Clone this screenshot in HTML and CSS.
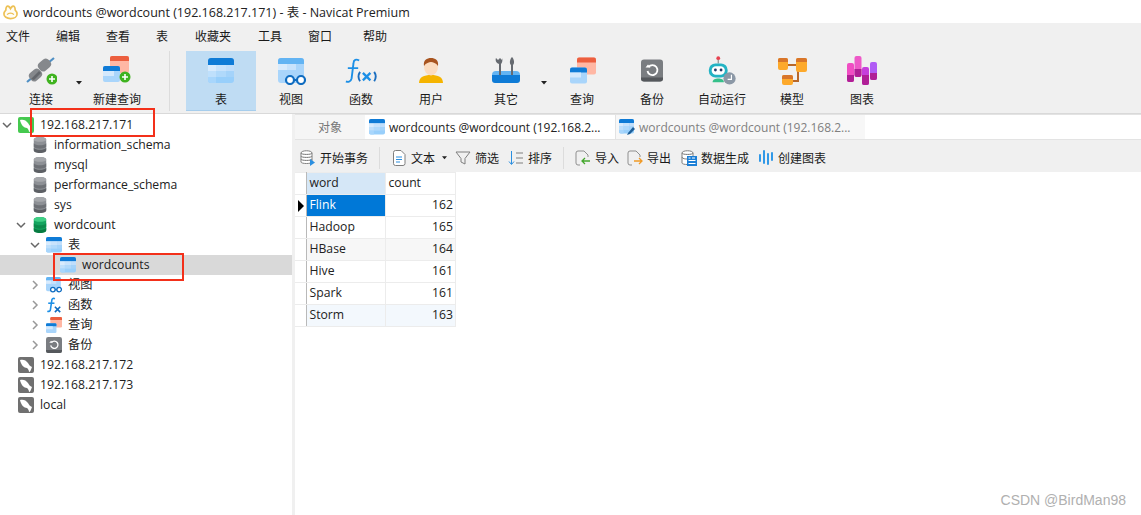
FILE: index.html
```html
<!DOCTYPE html>
<html lang="zh-CN">
<head>
    <meta charset="UTF-8">
    <meta name="viewport" content="width=device-width, initial-scale=1.0">
    <title>wordcounts @wordcount (192.168.217.171) - 表 - Navicat Premium</title>
    <link rel="stylesheet" href="styles.css">
</head>
<body>
    <!-- 공용 아이콘 -->
    <svg class="defs" aria-hidden="true">
        <symbol id="i-table" viewBox="0 0 26 26">
            <rect x="0" y="0" width="26" height="25" rx="3" fill="#98cffb"/>
            <path d="M0 7V3a3 3 0 0 1 3-3h20a3 3 0 0 1 3 3v4z" fill="#0f7bd6"/>
            <rect x="0" y="7" width="8" height="6" fill="#d8ebfd"/>
            <rect x="8" y="7" width="10" height="6" fill="#c8e3fc"/>
            <rect x="18" y="7" width="8" height="6" fill="#c0defb"/>
            <rect x="0" y="13" width="8" height="6" fill="#bfe0fc"/>
            <rect x="8" y="13" width="10" height="6" fill="#b0d9fb"/>
            <rect x="18" y="13" width="8" height="6" fill="#a4d3fa"/>
            <path d="M0 19h8v6H3a3 3 0 0 1-3-3z" fill="#a8d6fc"/>
        </symbol>
        <symbol id="i-db" viewBox="0 0 16 18">
            <path d="M1 3c0-4 14-4 14 0v12c0 4-14 4-14 0z" fill="#8d9095"/>
            <path d="M1 7c2 3 12 3 14 0v4c-2 3-12 3-14 0z" fill="#6e7176"/>
            <path d="M1 12c2 3 12 3 14 0v3c0 4-14 4-14 0z" fill="#5d6065"/>
            <path d="M1 3c0-4 14-4 14 0 0 3-14 3-14 0z" fill="#a6a8ac"/>
        </symbol>
        <symbol id="i-dbgreen" viewBox="0 0 16 18">
            <path d="M1 3c0-4 14-4 14 0v12c0 4-14 4-14 0z" fill="#13a55f"/>
            <path d="M1 7c2 3 12 3 14 0v4c-2 3-12 3-14 0z" fill="#0c8a4c"/>
            <path d="M1 12c2 3 12 3 14 0v3c0 4-14 4-14 0z" fill="#087a41"/>
            <path d="M1 3c0-4 14-4 14 0 0 3-14 3-14 0z" fill="#3fcf85"/>
        </symbol>
        <symbol id="i-dolphin" viewBox="0 0 16 16">
            <path d="M2 3c3-1 6 0 8 3 1 2 2 3 4 4-1 3-2 5-3 5 0-2-1-3-2-4-3 0-6-3-7-8z" fill="#fff"/>
        </symbol>
        <symbol id="i-query" viewBox="0 0 26 26">
            <rect x="7" y="0" width="19" height="17" rx="2" fill="#ffb7a4"/>
            <path d="M7 5V2a2 2 0 0 1 2-2h15a2 2 0 0 1 2 2v3z" fill="#ec5f3f"/>
            <rect x="0" y="10" width="17" height="16" rx="2" fill="#a9d5fb"/>
            <path d="M0 15v-3a2 2 0 0 1 2-2h13a2 2 0 0 1 2 2v3z" fill="#0f7bd6"/>
            <rect x="0" y="15" width="11" height="5" fill="#d4e9fd"/>
        </symbol>
        <symbol id="i-backup" viewBox="0 0 22 22">
            <rect x="0" y="0" width="22" height="22" rx="3" fill="#7a7d81"/>
            <path d="M0 18h22v1a3 3 0 0 1-3 3H3a3 3 0 0 1-3-3z" fill="#55585c"/>
            <path d="M7.500 7.500a5 5 0 1 1-1 4" fill="none" stroke="#fff" stroke-width="1.800"/>
            <path d="M4.500 8h5l-2.500-3z" fill="#fff"/>
        </symbol>
        <symbol id="i-view" viewBox="0 0 28 28">
            <rect x="0" y="0" width="26" height="25" rx="3" fill="#a9d5fb"/>
            <path d="M0 6V3a3 3 0 0 1 3-3h20a3 3 0 0 1 3 3v3z" fill="#63b4f3"/>
            <rect x="0" y="6" width="9" height="6" fill="#d8ebfd"/>
            <rect x="9" y="6" width="9" height="6" fill="#c8e3fc"/>
            <path d="M15 22h4" stroke="#0f6cc0" stroke-width="2"/>
            <circle cx="12" cy="22" r="4" fill="#fff" stroke="#0f6cc0" stroke-width="2.200"/>
            <circle cx="23" cy="22" r="4" fill="#fff" stroke="#0f6cc0" stroke-width="2.200"/>
        </symbol>
        <symbol id="i-func" viewBox="0 0 34 28">
            <path d="M15 3c-3-2-6-1-6 3l-2 16c-1 4-4 4-6 3" fill="none" stroke="#1c8fe6" stroke-width="2"/>
            <path d="M3 11h11" stroke="#1c8fe6" stroke-width="2"/>
            <path d="M16 15c-2 3-2 7 0 10M31 15c2 3 2 7 0 10" fill="none" stroke="#1c6fc0" stroke-width="2"/>
            <path d="M19 16l8 8M27 16l-8 8" stroke="#1c8fe6" stroke-width="2.500"/>
        </symbol>
        <symbol id="i-fx" viewBox="0 0 16 18">
            <path d="M9 2C7 1 5.500 2 5.500 4L4 14c0 2-2 2.500-3.500 2" fill="none" stroke="#1c8fe6" stroke-width="1.800"/>
            <path d="M1.500 7h7" stroke="#1c8fe6" stroke-width="1.800"/>
            <path d="M9 11l6 6M15 11l-6 6" stroke="#0f6cc0" stroke-width="1.800"/>
        </symbol>
        <symbol id="i-plus" viewBox="0 0 12 12">
            <circle cx="6" cy="6" r="5.500" fill="#3fb31f"/>
            <path d="M6 3v6M3 6h6" stroke="#fff" stroke-width="1.600"/>
        </symbol>
        <symbol id="i-down" viewBox="0 0 6 4">
            <path d="M0 0h6L3 3.500z" fill="#222"/>
        </symbol>
        <symbol id="i-open" viewBox="0 0 12 12">
            <path d="M2 4l4 4 4-4" fill="none" stroke="#666" stroke-width="1.500"/>
        </symbol>
        <symbol id="i-shut" viewBox="0 0 12 12">
            <path d="M4 2l4 4-4 4" fill="none" stroke="#999" stroke-width="1.500"/>
        </symbol>
    </svg>

    <div class="titlebar">
        <svg class="app-logo" viewBox="0 0 16 16">
            <path d="M8 15C4 15 1 13 1 10c0-2 1-3 2-4C3 3 4 1 6 2c1 .5 1.500 1.500 2 2.500C8.500 3.500 9 2.500 10 2c2-1 3 1 3 4 1 1 2 2 2 4 0 3-3 5-7 5z" fill="#fffdf5" stroke="#edc156" stroke-width="1.800"/>
            <path d="M4.500 11c1-2.500 6-2.500 7 0" fill="none" stroke="#edc156" stroke-width="1.400"/>
        </svg>
        <span>wordcounts @wordcount (192.168.217.171) - 表 - Navicat Premium</span>
    </div>

    <div class="menubar">
        <span>文件</span>
        <span>编辑</span>
        <span>查看</span>
        <span>表</span>
        <span class="menu-nudge">收藏夹</span>
        <span class="menu-nudge">工具</span>
        <span>窗口</span>
        <span class="menu-help">帮助</span>
    </div>

    <div class="toolbar">
        <div class="tool">
            <svg class="tool-icon" viewBox="0 0 32 30">
                <path d="M2 27l6-5M29 3l-6 5" stroke="#4f8fc4" stroke-width="2.200"/>
                <rect x="13" y="5" width="13" height="10" rx="4" transform="rotate(-40 19.500 10)" fill="#85888c"/>
                <rect x="4" y="15" width="13" height="10" rx="4" transform="rotate(-40 10.500 20)" fill="#85888c"/>
                <path d="M6 24l8-8 2 2-7 7z" fill="#63666b"/>
                <use href="#i-plus" x="21" y="18" width="12" height="12"/>
            </svg>
            <span>连接</span>
        </div>
        <svg class="drop"><use href="#i-down"/></svg>
        <div class="tool">
            <svg class="tool-icon" viewBox="0 0 32 30">
                <use href="#i-query" x="2" y="1" width="26" height="26"/>
                <use href="#i-plus" x="18" y="16" width="12" height="12"/>
            </svg>
            <span>新建查询</span>
        </div>
        <div class="tool-sep"></div>
        <div class="tool tool-on">
            <svg class="tool-icon" viewBox="0 0 32 30"><use href="#i-table" x="3" y="3" width="26" height="26"/></svg>
            <span>表</span>
        </div>
        <div class="tool">
            <svg class="tool-icon" viewBox="0 0 32 30"><use href="#i-view" x="3" y="3" width="28" height="28"/></svg>
            <span>视图</span>
        </div>
        <div class="tool">
            <svg class="tool-icon" viewBox="0 0 34 30"><use href="#i-func" x="0" y="2" width="34" height="28"/></svg>
            <span>函数</span>
        </div>
        <div class="tool">
            <svg class="tool-icon" viewBox="0 0 32 30">
                <path d="M4 28c0-6 5-8 12-8s12 2 12 8z" fill="#f5b400"/>
                <ellipse cx="16" cy="12" rx="7" ry="8.500" fill="#fbdcc0"/>
                <path d="M9 11c-1-6 3-8 7-8s8 2 7 8c-2-3-5-4-7-4s-5 1-7 4z" fill="#a8541f"/>
            </svg>
            <span>用户</span>
        </div>
        <div class="tool tool-other">
            <svg class="tool-icon" viewBox="0 0 32 30">
                <path d="M2 20h28v5a3 3 0 0 1-3 3H5a3 3 0 0 1-3-3z" fill="#0f7bd6"/>
                <path d="M2 20a4 4 0 0 1 4-4h20a4 4 0 0 1 4 4z" fill="#63b4f3"/>
                <path d="M9 20V9C6 8 5 5 6 3l2 2 2-2 2 2 0-2c1 2 0 5-1 6v11z" fill="#666a70"/>
                <path d="M21 20V10c-2-2-1-6 1-8 2 2 3 6 1 8v10z" fill="#666a70"/>
            </svg>
            <span>其它</span>
        </div>
        <svg class="drop"><use href="#i-down"/></svg>
        <div class="tool">
            <svg class="tool-icon" viewBox="0 0 32 30"><use href="#i-query" x="4" y="2" width="26" height="27"/></svg>
            <span>查询</span>
        </div>
        <div class="tool">
            <svg class="tool-icon" viewBox="0 0 32 30"><use href="#i-backup" x="5" y="2" width="22" height="27"/></svg>
            <span>备份</span>
        </div>
        <div class="tool">
            <svg class="tool-icon" viewBox="0 0 34 30">
                <circle cx="13" cy="2.500" r="2" fill="#e8414f"/>
                <path d="M13 4v4" stroke="#888" stroke-width="1.200"/>
                <rect x="3" y="8" width="20" height="15" rx="7" fill="#23b3c4"/>
                <rect x="6" y="11" width="14" height="9" rx="4.500" fill="#fff"/>
                <circle cx="10" cy="15" r="1.500" fill="#243b6b"/>
                <circle cx="16" cy="15" r="1.500" fill="#243b6b"/>
                <path d="M7 28c0-3 3-4 6-4s6 1 6 4z" fill="#36c08a"/>
                <circle cx="25" cy="24" r="6.500" fill="#8c98a6"/>
                <path d="M27 20v5h-4" fill="none" stroke="#fff" stroke-width="1.200"/>
            </svg>
            <span>自动运行</span>
        </div>
        <div class="tool">
            <svg class="tool-icon" viewBox="0 0 32 30">
                <path d="M12 10h8M22 14v12h-8" fill="none" stroke="#b8682a" stroke-width="2"/>
                <rect x="2" y="3" width="10" height="12" rx="2" fill="#fda92b"/>
                <rect x="20" y="3" width="11" height="14" rx="2" fill="#fda92b"/>
                <rect x="6" y="20" width="11" height="10" rx="2" fill="#fda92b"/>
                <path d="M2 7V5a2 2 0 0 1 2-2h6a2 2 0 0 1 2 2v2zM20 7V5a2 2 0 0 1 2-2h7a2 2 0 0 1 2 2v2zM6 24v-2a2 2 0 0 1 2-2h7a2 2 0 0 1 2 2v2z" fill="#d8752a"/>
            </svg>
            <span>模型</span>
        </div>
        <div class="tool">
            <svg class="tool-icon" viewBox="0 0 32 30">
                <rect x="1" y="8" width="7" height="19" rx="2" fill="#f04dc3"/>
                <rect x="8.500" y="1" width="7" height="21" rx="2" fill="#ee59c8"/>
                <rect x="16" y="12" width="7" height="18" rx="2" fill="#c63fdc"/>
                <rect x="24" y="7" width="7" height="18" rx="2" fill="#b05cf5"/>
                <path d="M1 20h7v5a2 2 0 0 1-2 2H3a2 2 0 0 1-2-2zM8.500 14h7v6a2 2 0 0 1-2 2h-3a2 2 0 0 1-2-2zM16 20h7v8a2 2 0 0 1-2 2h-3a2 2 0 0 1-2-2zM24 18h7v5a2 2 0 0 1-2 2h-3a2 2 0 0 1-2-2z" fill="#b01f96"/>
            </svg>
            <span>图表</span>
        </div>
    </div>

    <div class="main">
        <div class="tree">
            <div class="node">
                <svg class="arrow"><use href="#i-open"/></svg>
                <span class="conn conn-on"><svg class="dolphin"><use href="#i-dolphin"/></svg></span>
                <span>192.168.217.171</span>
            </div>
            <div class="node lv1">
                <span class="arrow"></span><svg class="nicon"><use href="#i-db"/></svg><span>information_schema</span>
            </div>
            <div class="node lv1">
                <span class="arrow"></span><svg class="nicon"><use href="#i-db"/></svg><span>mysql</span>
            </div>
            <div class="node lv1">
                <span class="arrow"></span><svg class="nicon"><use href="#i-db"/></svg><span>performance_schema</span>
            </div>
            <div class="node lv1">
                <span class="arrow"></span><svg class="nicon"><use href="#i-db"/></svg><span>sys</span>
            </div>
            <div class="node lv1">
                <svg class="arrow"><use href="#i-open"/></svg><svg class="nicon"><use href="#i-dbgreen"/></svg><span>wordcount</span>
            </div>
            <div class="node lv2">
                <svg class="arrow"><use href="#i-open"/></svg><svg class="nicon"><use href="#i-table"/></svg><span>表</span>
            </div>
            <div class="node lv3 node-on">
                <span class="arrow"></span><svg class="nicon"><use href="#i-table"/></svg><span>wordcounts</span>
            </div>
            <div class="node lv2">
                <svg class="arrow"><use href="#i-shut"/></svg><svg class="nicon"><use href="#i-view"/></svg><span>视图</span>
            </div>
            <div class="node lv2">
                <svg class="arrow"><use href="#i-shut"/></svg><svg class="nicon"><use href="#i-fx"/></svg><span>函数</span>
            </div>
            <div class="node lv2">
                <svg class="arrow"><use href="#i-shut"/></svg><svg class="nicon"><use href="#i-query"/></svg><span>查询</span>
            </div>
            <div class="node lv2">
                <svg class="arrow"><use href="#i-shut"/></svg><svg class="nicon"><use href="#i-backup"/></svg><span>备份</span>
            </div>
            <div class="node">
                <span class="arrow"></span>
                <span class="conn"><svg class="dolphin"><use href="#i-dolphin"/></svg></span>
                <span>192.168.217.172</span>
            </div>
            <div class="node">
                <span class="arrow"></span>
                <span class="conn"><svg class="dolphin"><use href="#i-dolphin"/></svg></span>
                <span>192.168.217.173</span>
            </div>
            <div class="node">
                <span class="arrow"></span>
                <span class="conn"><svg class="dolphin"><use href="#i-dolphin"/></svg></span>
                <span>local</span>
            </div>
        </div>

        <div class="content">
            <div class="tabs">
                <div class="tab tab-object">对象</div>
                <div class="tab tab-on">
                    <svg class="tab-icon"><use href="#i-table"/></svg>
                    <span>wordcounts @wordcount (192.168.2...</span>
                </div>
                <div class="tab tab-off">
                    <svg class="tab-icon" viewBox="0 0 16 16">
                        <use href="#i-table" width="15" height="15"/>
                        <path d="M9 14l5-6 2 2-5 5-3 1z" fill="#1c5f99"/>
                    </svg>
                    <span>wordcounts @wordcount (192.168.2...</span>
                </div>
            </div>

            <div class="subbar">
                <div class="sub">
                    <svg class="sub-icon" viewBox="0 0 16 16">
                        <path d="M1 3c0-3 11-3 11 0v9c0 2-11 2-11 0zM1 6c0 2 11 2 11 0M1 9c0 2 11 2 11 0M1 3c0 2 11 2 11 0" fill="#fff" stroke="#7f7f7f"/>
                        <path d="M10 9l5 3.500-5 3.500z" fill="#2b8fe0"/>
                    </svg>
                    <span>开始事务</span>
                </div>
                <div class="sub-sep"></div>
                <div class="sub">
                    <svg class="sub-icon" viewBox="0 0 16 16">
                        <path d="M2.500 2.500a2 2 0 0 1 2-2H10l4 4v9a2 2 0 0 1-2 2H4.500a2 2 0 0 1-2-2z" fill="#fff" stroke="#7f7f7f"/>
                        <path d="M5 7h6M5 9.500h6M5 12h4" stroke="#2b8fe0"/>
                    </svg>
                    <span>文本</span>
                    <svg class="sub-drop"><use href="#i-down"/></svg>
                </div>
                <div class="sub">
                    <svg class="sub-icon" viewBox="0 0 16 16">
                        <path d="M1 2h14L10 8.500V14l-4-2V8.500z" fill="none" stroke="#7f7f7f"/>
                    </svg>
                    <span>筛选</span>
                </div>
                <div class="sub sub-sort">
                    <svg class="sub-icon" viewBox="0 0 16 16">
                        <path d="M3.500 1v13M1 11.500l2.500 3 2.500-3" fill="none" stroke="#2b8fe0"/>
                        <path d="M8 3h7M8 8h7M8 13h7" stroke="#7f7f7f"/>
                    </svg>
                    <span>排序</span>
                </div>
                <div class="sub-sep"></div>
                <div class="sub">
                    <svg class="sub-icon" viewBox="0 0 16 16">
                        <path d="M9 1H3a2 2 0 0 0-2 2v10a2 2 0 0 0 2 2h2M9 1l4 4v2" fill="none" stroke="#8f8f8f"/>
                        <path d="M15 11H7M10 8l-3 3 3 3" fill="none" stroke="#43a72c" stroke-width="1.300"/>
                    </svg>
                    <span>导入</span>
                </div>
                <div class="sub">
                    <svg class="sub-icon" viewBox="0 0 16 16">
                        <path d="M9 1H3a2 2 0 0 0-2 2v10a2 2 0 0 0 2 2h2M9 1l4 4v2" fill="none" stroke="#8f8f8f"/>
                        <path d="M7 11h8M12 8l3 3-3 3" fill="none" stroke="#f09a26" stroke-width="1.300"/>
                    </svg>
                    <span>导出</span>
                </div>
                <div class="sub sub-gen">
                    <svg class="sub-icon" viewBox="0 0 16 16">
                        <path d="M1 3c0-3 11-3 11 0v10c0 2-11 2-11 0zM1 3c0 2 11 2 11 0M1 7c0 2 4 2 5 2" fill="#fff" stroke="#7f7f7f"/>
                        <rect x="6" y="6" width="10" height="10" fill="#1c7fd6"/>
                        <path d="M7.500 8h2M11 8h3M7.500 10.500h7M7.500 13.500h7" stroke="#fff"/>
                    </svg>
                    <span>数据生成</span>
                </div>
                <div class="sub sub-chart">
                    <svg class="sub-icon" viewBox="0 0 16 16">
                        <path d="M2 5v6M6 1v12M10 4v10M14 3v7" stroke="#1c8fe6" stroke-width="1.800" stroke-linecap="round" fill="none"/>
                    </svg>
                    <span>创建图表</span>
                </div>
            </div>

            <table class="grid">
                <tr>
                    <th class="mark"></th>
                    <th class="head-on">word</th>
                    <th>count</th>
                </tr>
                <tr>
                    <td class="mark"><span class="pointer"></span></td>
                    <td class="cell-on">Flink</td>
                    <td class="num">162</td>
                </tr>
                <tr>
                    <td class="mark"></td>
                    <td>Hadoop</td>
                    <td class="num">165</td>
                </tr>
                <tr class="row-grey">
                    <td class="mark"></td>
                    <td>HBase</td>
                    <td class="num">164</td>
                </tr>
                <tr>
                    <td class="mark"></td>
                    <td>Hive</td>
                    <td class="num">161</td>
                </tr>
                <tr>
                    <td class="mark"></td>
                    <td>Spark</td>
                    <td class="num">161</td>
                </tr>
                <tr class="row-blue">
                    <td class="mark"></td>
                    <td>Storm</td>
                    <td class="num">163</td>
                </tr>
            </table>
        </div>
    </div>

    <!-- 빨간 표시 -->
    <div class="mark-box mark-conn"></div>
    <div class="mark-box mark-table"></div>
    <div class="watermark">CSDN @BirdMan98</div>
</body>
</html>
```

FILE: styles.css
```css
*{
    margin: 0;
    padding: 0;
    box-sizing: border-box;
}
html,body{
    height: 100%;
    overflow: hidden;
}
body{
    font-family: "Open Sans", "Noto Sans CJK SC", sans-serif;
    font-size: 12px;
    color: #1a1a1a;
    background-color: #fff;
}
.defs{
    display: none;
}
.titlebar{
    height: 23px;
    display: flex;
    align-items: center;
    gap: 5px;
    padding-left: 3px;
    font-size: 12.5px;
    color: #222;
}
.app-logo{
    width: 15px;
    height: 16px;
}
.menubar{
    height: 26px;
    display: flex;
    align-items: center;
    padding-left: 6px;
    gap: 26px;
    background-color: #f0f0f0;
}
.menu-nudge{
    margin-left: 1px;
}
.menu-help{
    margin-left: 5px;
}
.toolbar{
    height: 65px;
    display: flex;
    align-items: flex-start;
    padding: 2px 0 0 6px;
    background-color: #f0f0f0;
    border-bottom: 1px solid #d9d9d9;
}
.tool{
    width: 70px;
    height: 60px;
    display: flex;
    flex-direction: column;
    align-items: center;
    gap: 7px;
    padding-top: 4px;
}
.tool span{
    line-height: 16px;
}
.tool-on{
    background-color: #bfdcf3;
    border-bottom: 1px solid #a6cdec;
}
.tool-other{
    margin-left: 5px;
}
.tool-icon{
    width: 32px;
    height: 30px;
}
.drop{
    width: 6px;
    height: 4px;
    margin-top: 30px;
}
.tool-sep{
    width: 1px;
    height: 60px;
    margin: 0 16px 0 17px;
    background-color: #dcdcdc;
}
.main{
    height: 401px;
    display: flex;
}
.tree{
    width: 295px;
    padding-top: 1px;
    font-size: 12.2px;
    border-right: 3px solid #f0f0f0;
}
.node{
    height: 20px;
    display: flex;
    align-items: center;
    color: #222;
}
.node > span:last-child{
    padding-bottom: 2px;
}
.lv1{
    padding-left: 14px;
}
.lv2{
    padding-left: 28px;
}
.lv3{
    padding-left: 42px;
}
.node-on{
    background-color: #d9d9d9;
}
.arrow{
    width: 12px;
    height: 12px;
    margin: 0 5px 0 1px;
    flex-shrink: 0;
}
.nicon{
    width: 16px;
    height: 16px;
    margin-right: 6px;
    flex-shrink: 0;
}
.conn{
    width: 16px;
    height: 16px;
    margin-right: 6px;
    border-radius: 2px;
    background-color: #707070;
    display: flex;
}
.conn-on{
    background-color: #45c94f;
}
.dolphin{
    width: 16px;
    height: 16px;
}
.content{
    flex: 1;
}
.tabs{
    height: 26px;
    display: flex;
    border-top: 1px solid #e3e3e3;
    border-bottom: 1px solid #e3e3e3;
}
.tab{
    display: flex;
    align-items: center;
    gap: 4px;
}
.tab-object{
    width: 70px;
    justify-content: center;
    background-color: #f5f5f5;
    color: #777;
}
.tab-on{
    width: 250px;
    padding-left: 4px;
    color: #222;
}
.tab-off{
    width: 250px;
    padding-left: 3px;
    background-color: #f7f7f7;
    border-left: 1px solid #e3e3e3;
    color: #808080;
}
.tab-icon{
    width: 16px;
    height: 16px;
}
.subbar{
    height: 32px;
    display: flex;
    align-items: center;
    padding: 3px 0 0 5px;
    gap: 8px;
    background-color: #f0f0f0;
}
.sub{
    display: flex;
    align-items: center;
    gap: 4px;
}
.sub-sort{
    margin-left: 1px;
}
.sub-gen{
    margin-left: 2px;
}
.sub-chart{
    margin-left: 1px;
}
.sub-icon{
    width: 16px;
    height: 16px;
}
.sub-drop{
    width: 5px;
    height: 4px;
    margin-left: 3px;
}
.sub-sep{
    width: 1px;
    height: 22px;
    margin: 0 3px;
    background-color: #dcdcdc;
}
.grid{
    border-collapse: collapse;
    table-layout: fixed;
    width: 161px;
    font-size: 12.2px;
}
.grid th,.grid td{
    height: 22px;
    padding: 0 2px 2px 3px;
    border: 1px solid #ececec;
    font-weight: 400;
    text-align: left;
    color: #222;
}
.grid th:nth-child(2){
    width: 79px;
}
.grid .mark{
    width: 11px;
    padding: 0;
    border-right: 1px solid #b9b9b9;
    border-left: 0;
    background-color: #fff;
}
.grid .head-on{
    background-color: #d5e7f7;
}
.grid .cell-on{
    background-color: #0078d7;
    color: #fff;
}
.grid .num{
    text-align: right;
}
.pointer{
    display: block;
    width: 0;
    height: 0;
    margin-left: 3px;
    border-left: 6px solid #000;
    border-top: 6px solid transparent;
    border-bottom: 6px solid transparent;
}
.row-grey td{
    background-color: #f7f7f7;
}
.row-blue td{
    background-color: #f3f8fd;
}
.mark-box{
    position: absolute;
    border: 2px solid #f3301a;
}
.mark-conn{
    left: 30px;
    top: 108px;
    width: 125px;
    height: 29px;
}
.mark-table{
    left: 53px;
    top: 253px;
    width: 131px;
    height: 28px;
}
.watermark{
    position: absolute;
    right: 15px;
    bottom: 7px;
    font-family: "Liberation Sans", sans-serif;
    font-size: 14px;
    color: #b0b0b0;
}
```
